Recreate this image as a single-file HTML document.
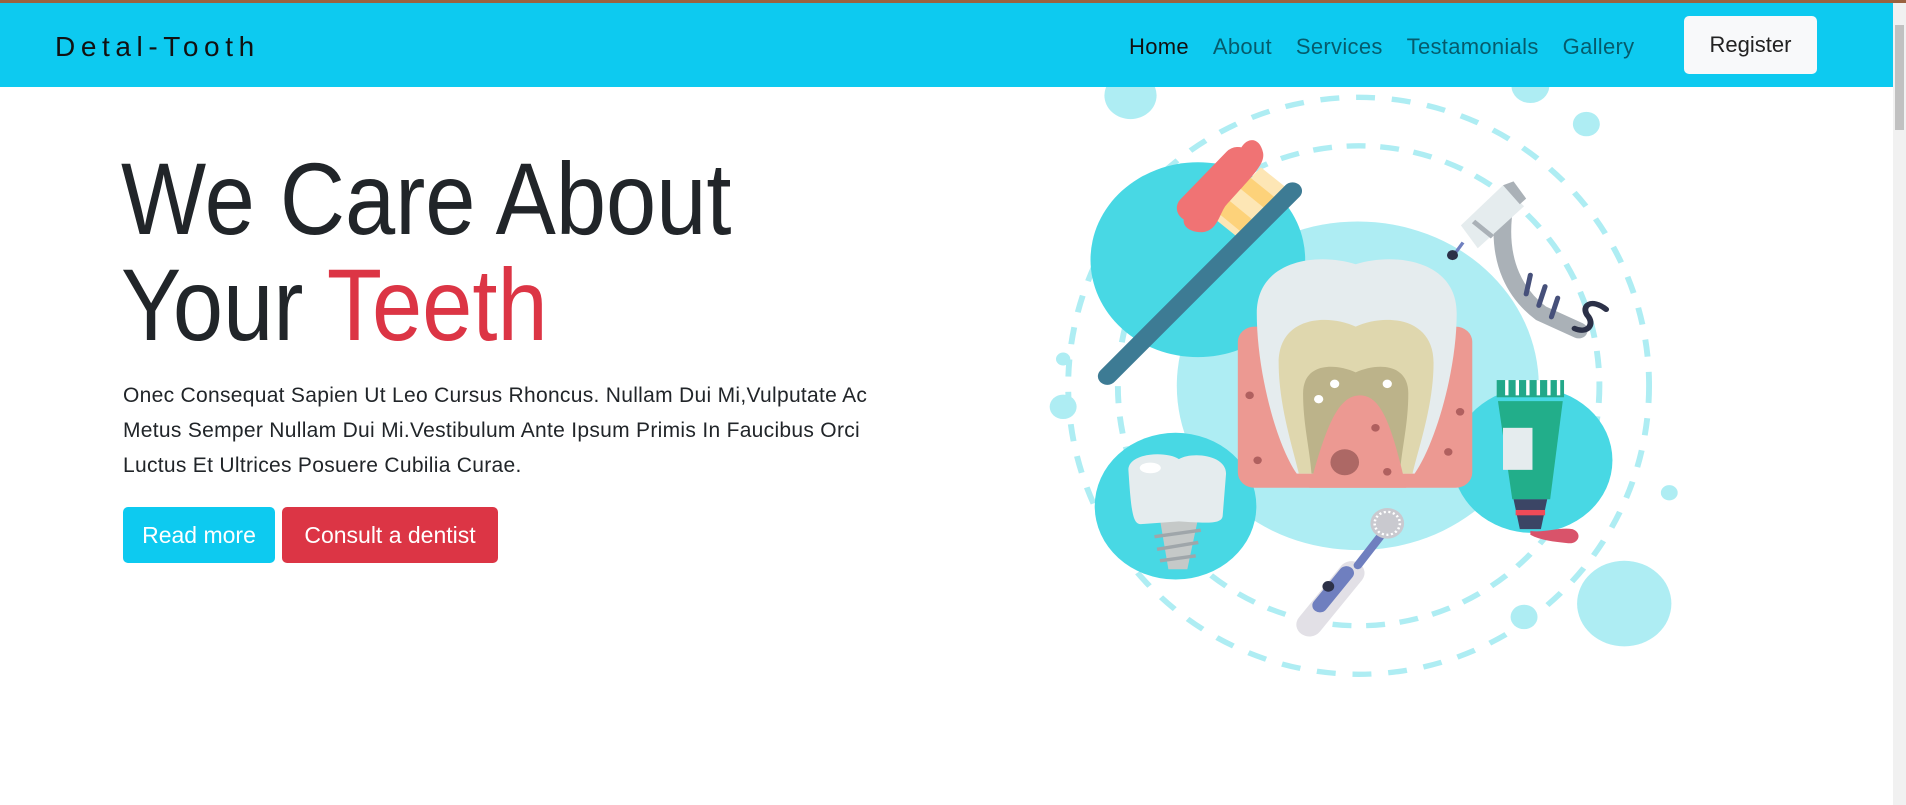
<!DOCTYPE html>
<html><head><meta charset="utf-8"><style>
*{margin:0;padding:0;box-sizing:border-box}
html,body{width:1906px;height:805px;overflow:hidden;background:#fff;font-family:"Liberation Sans",Arial,sans-serif}
.top{position:absolute;left:0;top:0;width:1906px;height:3px;background:#9a6240}
.nav{position:absolute;left:0;top:3px;width:1893px;height:84px;background:#0dcaf0}
.brand{position:absolute;left:55px;top:28px;font-size:28px;letter-spacing:5.6px;color:#111}
.links{position:absolute;left:1129px;top:31px;font-size:22px;color:rgba(0,0,0,.55);white-space:nowrap}
.links span{margin-right:24px;letter-spacing:.3px}
.links span:first-child{color:#111}
.reg{position:absolute;left:1684px;top:13px;width:133px;height:58px;background:#f8f9fa;border-radius:5px;font-size:22px;color:#222;text-align:center;line-height:58px}
.sb{position:absolute;left:1893px;top:3px;width:13px;height:802px;background:#f1f1f1}
.sb div{position:absolute;left:2px;top:22px;width:9px;height:105px;background:#c1c1c1}
h1{position:absolute;left:121px;top:146px;font-weight:normal;font-size:102px;line-height:106px;color:#212529;transform:scaleX(.885);transform-origin:left top;white-space:nowrap}
h1 .r{color:#dc3545}
p{position:absolute;left:123px;top:378px;font-size:21px;line-height:35px;color:#212529;white-space:nowrap;letter-spacing:.3px}
.btn{position:absolute;top:507px;height:56px;border-radius:5px;color:#fff;font-size:23px;line-height:56px;text-align:center}
</style></head><body>
<div class="top"></div>
<div class="nav">
<div class="brand">Detal-Tooth</div>
<div class="links"><span>Home</span><span>About</span><span>Services</span><span>Testamonials</span><span>Gallery</span></div>
<div class="reg">Register</div>
</div>
<div class="sb"><div></div></div>
<h1>We Care About<br>Your <span class="r">Teeth</span></h1>
<p>Onec Consequat Sapien Ut Leo Cursus Rhoncus. Nullam Dui Mi,Vulputate Ac<br>Metus Semper Nullam Dui Mi.Vestibulum Ante Ipsum Primis In Faucibus Orci<br>Luctus Et Ultrices Posuere Cubilia Curae.</p>
<div class="btn" style="left:123px;width:152px;background:#0dcaf0">Read more</div>
<div class="btn" style="left:282px;width:216px;background:#dc3545">Consult a dentist</div>

<svg style="position:absolute;left:1040px;top:87px" width="660" height="593" viewBox="0 18 1568 1552" preserveAspectRatio="none">
<g fill="#aeedf3">
<circle cx="215" cy="40" r="62"/><circle cx="1298" cy="115" r="32"/><circle cx="1165" cy="15" r="45"/>
<circle cx="55" cy="730" r="17"/><circle cx="55" cy="855" r="32"/><circle cx="1495" cy="1080" r="20"/>
<circle cx="1388" cy="1370" r="112"/><circle cx="1150" cy="1405" r="32"/>
</g>
<ellipse cx="757" cy="800" rx="572" ry="628" fill="none" stroke="#aeedf3" stroke-width="14" stroke-dasharray="45 35"/>
<ellipse cx="757" cy="800" rx="690" ry="755" fill="none" stroke="#aeedf3" stroke-width="14" stroke-dasharray="45 40"/>
<circle cx="755" cy="800" r="430" fill="#aeedf3"/>
<circle cx="375" cy="470" r="255" fill="#48d8e4"/>
<circle cx="322" cy="1115" r="192" fill="#48d8e4"/>
<circle cx="1170" cy="995" r="190" fill="#48d8e4"/>
<!-- toothbrush -->
<line x1="440" y1="385" x2="555" y2="255" stroke="#fde6b5" stroke-width="80"/>
<line x1="450" y1="372" x2="478" y2="341" stroke="#fdd27a" stroke-width="80"/>
<line x1="505" y1="310" x2="530" y2="282" stroke="#fdd27a" stroke-width="80"/>
<path d="M350,345 C395,295 440,250 470,200 C480,150 520,140 530,190 C535,220 505,250 440,330 C425,355 420,395 385,398 C345,398 330,370 350,345 Z" fill="#f07374"/>
<path d="M360,335 L470,210" stroke="#f07374" stroke-width="70" stroke-linecap="round"/>
<line x1="160" y1="775" x2="600" y2="290" stroke="#3d7b94" stroke-width="45" stroke-linecap="round"/>
<!-- gum & tooth -->
<rect x="470" y="645" width="557" height="422" rx="40" fill="#ec9992"/>
<path d="M515,610 C515,470 660,450 750,482 C840,450 990,470 990,610 C990,760 940,950 890,1030 L610,1030 C560,950 515,760 515,610 Z" fill="#e5ecee"/>
<path d="M567,740 C567,620 680,610 750,645 C820,610 935,620 935,740 C935,850 900,960 885,1030 L615,1030 C600,960 567,850 567,740 Z" fill="#dfd7ae"/>
<path d="M625,820 C625,740 700,740 750,765 C800,740 875,740 875,820 C875,900 860,960 855,1030 L645,1030 C640,960 625,900 625,820 Z" fill="#bcb38a"/>
<path d="M640,1067 C680,900 710,825 760,825 C810,825 835,900 870,1067 Z" fill="#ec9992"/>
<g fill="#b0605f"><circle cx="498" cy="825" r="10"/><circle cx="517" cy="995" r="10"/><circle cx="797" cy="910" r="10"/><circle cx="825" cy="1025" r="10"/><circle cx="998" cy="868" r="10"/><circle cx="970" cy="973" r="10"/></g>
<circle cx="724" cy="1000" r="34" fill="#ad6865"/>
<g fill="#fff"><circle cx="700" cy="795" r="11"/><circle cx="825" cy="795" r="11"/><circle cx="662" cy="835" r="11"/></g>
<!-- implant -->
<polygon points="285,1150 375,1150 350,1280 305,1280" fill="#c5c9c8"/>
<g stroke="#9fa6aa" stroke-width="9"><line x1="272" y1="1195" x2="382" y2="1178"/><line x1="278" y1="1228" x2="376" y2="1210"/><line x1="285" y1="1258" x2="370" y2="1245"/></g>
<path d="M210,1020 C210,975 300,970 330,992 C360,972 442,980 442,1030 L434,1140 C432,1162 400,1160 330,1155 L240,1162 C222,1162 217,1140 210,1020 Z" fill="#e5ecee"/>
<ellipse cx="262" cy="1015" rx="25" ry="14" fill="#fff"/>
<!-- tube -->
<rect x="1085" y="785" width="160" height="45" fill="#22a889"/>
<g fill="#fff"><rect x="1105" y="785" width="8" height="40"/><rect x="1130" y="785" width="8" height="40"/><rect x="1155" y="785" width="8" height="40"/><rect x="1180" y="785" width="8" height="40"/><rect x="1205" y="785" width="8" height="40"/><rect x="1228" y="785" width="8" height="40"/></g>
<polygon points="1088,840 1242,840 1212,1097 1122,1097" fill="#22ae8a"/>
<rect x="1100" y="910" width="70" height="110" fill="#e5ecee"/>
<polygon points="1125,1097 1205,1097 1190,1175 1140,1175" fill="#3b4565"/>
<rect x="1130" y="1125" width="70" height="14" fill="#ef4b58"/>
<path d="M1165,1180 C1200,1185 1230,1170 1265,1175 C1290,1185 1280,1215 1255,1212 C1220,1208 1190,1205 1165,1190 Z" fill="#d9536a"/>
<!-- electric toothbrush -->
<line x1="640" y1="1425" x2="740" y2="1290" stroke="#e2e0e6" stroke-width="62" stroke-linecap="round"/>
<line x1="665" y1="1375" x2="728" y2="1290" stroke="#6f7fbf" stroke-width="36" stroke-linecap="round"/>
<circle cx="685" cy="1325" r="14" fill="#2c3148"/>
<line x1="755" y1="1270" x2="815" y2="1185" stroke="#6f7fbf" stroke-width="20" stroke-linecap="round"/>
<circle cx="825" cy="1160" r="40" fill="#c9c9cf"/>
<circle cx="825" cy="1160" r="30" fill="none" stroke="#fff" stroke-width="6" stroke-dasharray="5 6"/>
<!-- drill -->
<path d="M1100,360 C1090,480 1130,560 1190,610 L1280,655" fill="none" stroke="#aab1b7" stroke-width="42" stroke-linecap="round"/>
<g stroke="#46507a" stroke-width="12" stroke-linecap="round"><line x1="1165" y1="510" x2="1155" y2="560"/><line x1="1200" y1="540" x2="1185" y2="590"/><line x1="1230" y1="570" x2="1215" y2="620"/></g>
<path d="M1270,650 C1300,665 1320,640 1300,615 C1285,590 1310,570 1345,600" fill="none" stroke="#2c3148" stroke-width="14" stroke-linecap="round"/>
<polygon points="1000,380 1100,275 1150,330 1040,440" fill="#e5ecee"/>
<polygon points="1100,275 1125,265 1155,310 1140,325" fill="#aab1b7"/>
<line x1="1030" y1="370" x2="1075" y2="410" stroke="#aab1b7" stroke-width="12"/>
<line x1="1005" y1="425" x2="985" y2="455" stroke="#6f7fbf" stroke-width="8"/>
<circle cx="980" cy="458" r="13" fill="#2c3148"/>
</svg>
</body></html>
